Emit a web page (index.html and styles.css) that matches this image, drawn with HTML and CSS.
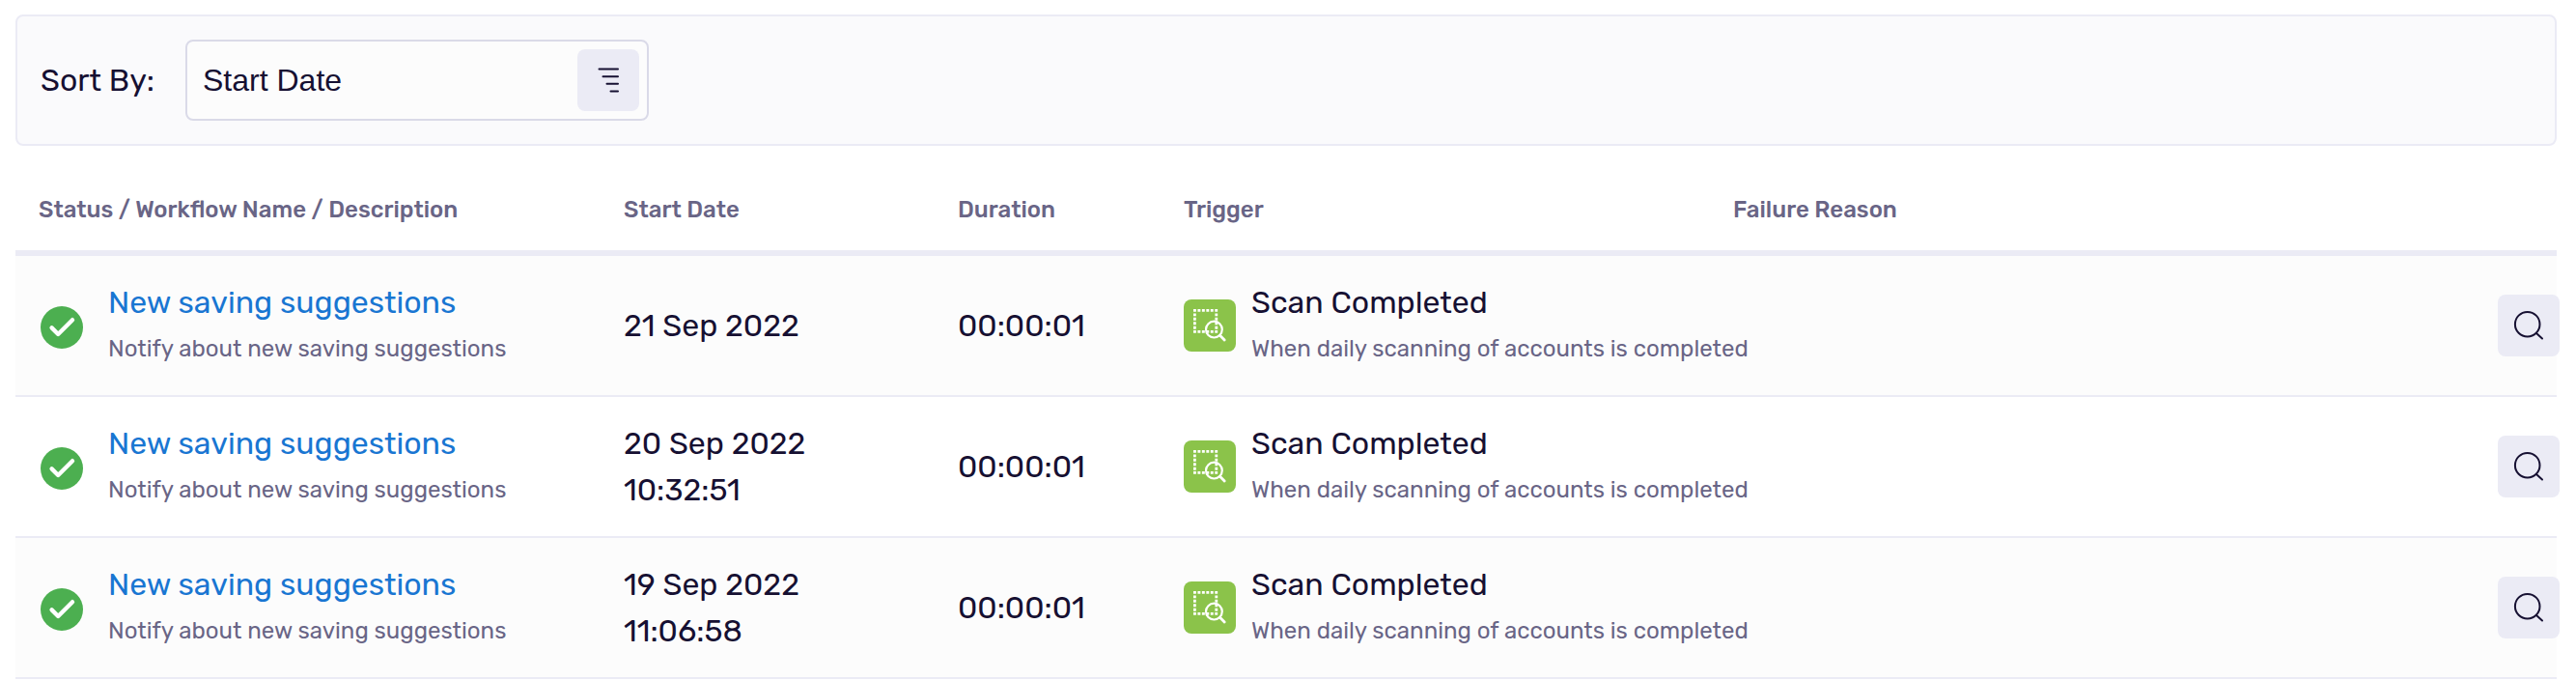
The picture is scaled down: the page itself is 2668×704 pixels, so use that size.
FILE: index.html
```html
<!DOCTYPE html>
<html lang="en">
<head>
  <meta charset="UTF-8">
  <meta name="viewport" content="width=device-width, initial-scale=1.0">
  <title>Workflow History</title>
  <link rel="stylesheet" href="styles.css">
</head>
<body>
  <svg class="sprite" width="0" height="0">
    <symbol id="icon-check" viewBox="0 0 44 44">
      <circle cx="22" cy="22" r="22" fill="#4caf50"/>
      <path d="M11.6 22.4L18.2 29L33 14.2" fill="none" stroke="#fff" stroke-width="4.4" stroke-linecap="round" stroke-linejoin="round"/>
    </symbol>
    <symbol id="icon-scan" viewBox="0 0 54 54">
      <rect width="54" height="54" rx="8" fill="#8bc34a"/>
      <path d="M10 11.4H35.2M10 33.4H35.2" fill="none" stroke="#fff" stroke-width="2.8" stroke-dasharray="2.9 1.55"/>
      <path d="M11.4 14.4V32M33.8 14.4V32" fill="none" stroke="#fff" stroke-width="2.8" stroke-dasharray="2.9 1.55"/>
      <circle cx="31.4" cy="31.1" r="8.4" fill="none" stroke="#fff" stroke-width="2.2"/>
      <path d="M37.5 37.2L42.2 42" stroke="#fff" stroke-width="2.8" stroke-linecap="round"/>
    </symbol>
    <symbol id="icon-search" viewBox="0 0 32 32">
      <circle cx="14.7" cy="14.7" r="12.8" fill="none" stroke="#161032" stroke-width="2"/>
      <path d="M24 24L30 29.5" stroke="#161032" stroke-width="2" stroke-linecap="round"/>
    </symbol>
  </svg>

  <div class="sort-bar">
    <label class="sort-label">Sort By:</label>
    <div class="sort-select">
      <span class="sort-value">Start Date</span>
      <button class="icon-btn">
        <svg width="32" height="32" viewBox="0 0 32 32" fill="none" stroke="#161032" stroke-width="2" stroke-linecap="round">
          <path d="M6.5 4.5H26M10.5 12.2H26M14.5 19.8H26M18.5 27.5H26"/>
        </svg>
      </button>
    </div>
  </div>

  <div class="table">
    <div class="row head">
      <div>Status / Workflow Name / Description</div>
      <div>Start Date</div>
      <div>Duration</div>
      <div>Trigger</div>
      <div>Failure Reason</div>
      <div></div>
    </div>

    <div class="row odd">
      <div class="cell">
        <svg class="status"><use href="#icon-check"/></svg>
        <div>
          <a class="name">New saving suggestions</a>
          <p class="desc">Notify about new saving suggestions</p>
        </div>
      </div>
      <div>21 Sep 2022</div>
      <div>00:00:01</div>
      <div class="cell">
        <svg class="scan"><use href="#icon-scan"/></svg>
        <div>
          <p>Scan Completed</p>
          <p class="desc">When daily scanning of accounts is completed</p>
        </div>
      </div>
      <div></div>
      <button class="icon-btn"><svg class="search"><use href="#icon-search"/></svg></button>
    </div>

    <div class="row">
      <div class="cell">
        <svg class="status"><use href="#icon-check"/></svg>
        <div>
          <a class="name">New saving suggestions</a>
          <p class="desc">Notify about new saving suggestions</p>
        </div>
      </div>
      <div>20 Sep 2022<br>10:32:51</div>
      <div>00:00:01</div>
      <div class="cell">
        <svg class="scan"><use href="#icon-scan"/></svg>
        <div>
          <p>Scan Completed</p>
          <p class="desc">When daily scanning of accounts is completed</p>
        </div>
      </div>
      <div></div>
      <button class="icon-btn"><svg class="search"><use href="#icon-search"/></svg></button>
    </div>

    <div class="row odd">
      <div class="cell">
        <svg class="status"><use href="#icon-check"/></svg>
        <div>
          <a class="name">New saving suggestions</a>
          <p class="desc">Notify about new saving suggestions</p>
        </div>
      </div>
      <div>19 Sep 2022<br>11:06:58</div>
      <div>00:00:01</div>
      <div class="cell">
        <svg class="scan"><use href="#icon-scan"/></svg>
        <div>
          <p>Scan Completed</p>
          <p class="desc">When daily scanning of accounts is completed</p>
        </div>
      </div>
      <div></div>
      <button class="icon-btn"><svg class="search"><use href="#icon-search"/></svg></button>
    </div>
  </div>
</body>
</html>
```
FILE: styles.css
```css
* {
  box-sizing: border-box;
}
body {
  margin: 0;
  padding: 15px 20px 0 16px;
  background-color: #fff;
  color: #161032;
  font-family: Rubik, Roboto, sans-serif;
  font-size: 32px;
  line-height: 48px;
  white-space: nowrap;
  overflow: hidden;
}
p {
  margin: 0;
}
.sprite {
  position: absolute;
}
.sort-bar {
  display: flex;
  align-items: center;
  height: 136px;
  padding-left: 24px;
  background-color: #fafafc;
  border: 2px solid #ebebf5;
  border-radius: 8px;
}
.sort-label {
  width: 150px;
}
.sort-select {
  display: flex;
  align-items: center;
  justify-content: space-between;
  width: 480px;
  height: 84px;
  padding: 0 8px 0 16px;
  background-color: #fcfcfc;
  border: 2px solid #dadae8;
  border-radius: 8px;
}
.sort-value {
  font-family: "Liberation Sans", Arial, sans-serif;
}
.icon-btn {
  display: flex;
  align-items: center;
  justify-content: center;
  width: 64px;
  height: 64px;
  padding: 0;
  background-color: #ebebf5;
  border: none;
  border-radius: 8px;
}
.row {
  display: grid;
  grid-template-columns: 606px 346px 234px 569px 792px 64px;
  align-items: center;
  height: 146px;
  padding-left: 24px;
  border-bottom: 2px solid #ebebf5;
}
.odd {
  background-color: #fcfcfc;
}
.head {
  height: 114px;
  padding-top: 24px;
  border-bottom: 6px solid #ebebf5;
  color: #696586;
  font-size: 24px;
  font-weight: 500;
  line-height: 36px;
}
.cell {
  display: flex;
  align-items: center;
}
.status {
  flex-shrink: 0;
  width: 44px;
  height: 44px;
  margin: 3px 26px 0 2px;
}
.name {
  color: #1976d2;
}
.desc {
  color: #696586;
  font-size: 24px;
}
.scan {
  flex-shrink: 0;
  width: 54px;
  height: 54px;
  margin-right: 16px;
}
.search {
  width: 32px;
  height: 32px;
}
```
